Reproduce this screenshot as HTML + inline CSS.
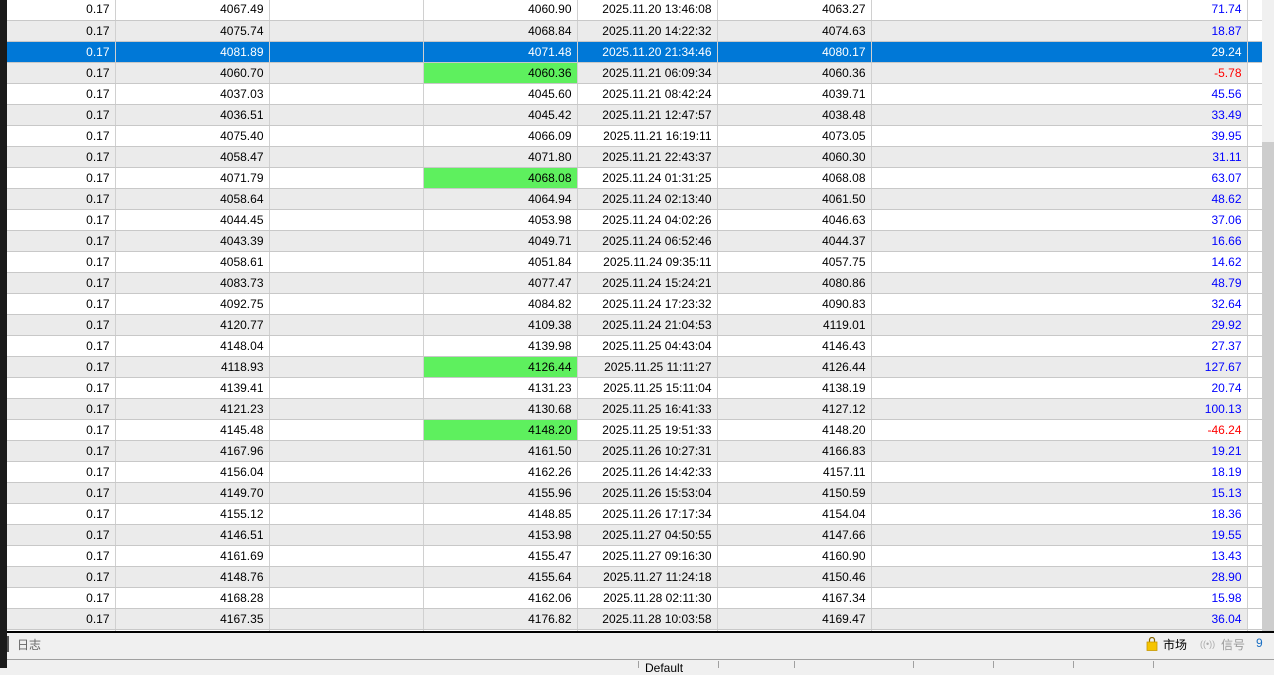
<!DOCTYPE html>
<html><head><meta charset="utf-8"><style>
*{margin:0;padding:0;box-sizing:border-box}
body{width:1274px;height:668px;overflow:hidden;background:#f0f0f0;position:relative;font-family:"Liberation Sans","Noto Sans CJK SC",sans-serif;font-size:12px}
#lb{position:absolute;left:0;top:0;width:7px;height:668px;background:#1a1a1a}
#wrap{position:absolute;left:7px;top:0;width:1255px;height:632px;background:#fff;overflow:hidden}
table{position:absolute;left:0;top:-1px;border-collapse:collapse;table-layout:fixed;width:1255px}
td{height:21px;border-right:1px solid #d0d0d0;border-bottom:1px solid #c8c8c8;text-align:right;padding:0 5px 0 0;white-space:nowrap;color:#000;line-height:20px}
tr:nth-child(even) td{background:#ebebeb}
tr.s td{background:#0078d7!important;color:#fff!important}
td.g{background:#5ef05e!important}
td.b{color:#0000ff}td.r{color:#ff0000}
td.e{border-right:none;background:#fff!important}
#sb{position:absolute;left:1262px;top:0;width:12px;height:632px;background:#f0f0f0}
#th{position:absolute;left:1262px;top:142px;width:12px;height:490px;background:#cdcdcd}
#bl{position:absolute;left:7px;top:631px;width:1267px;height:2px;background:#000}
#st{position:absolute;left:7px;top:633px;width:1267px;height:26px;background:#f0f0f0}
#gl{position:absolute;left:7px;top:659px;width:1267px;height:1px;background:#a0a0a0}
.t{position:absolute;top:636px;font-size:12px}
.d{position:absolute;top:661px;width:1px;height:7px;background:#a0a0a0}
</style></head><body>
<div id="lb"></div>
<div id="wrap"><table>
<colgroup><col style="width:108px"><col style="width:154px"><col style="width:154px"><col style="width:154px"><col style="width:140px"><col style="width:154px"><col style="width:376px"><col style="width:15px"></colgroup>
<tr><td>0.17</td><td>4067.49</td><td></td><td>4060.90</td><td>2025.11.20 13:46:08</td><td>4063.27</td><td class="b">71.74</td><td class="e"></td></tr>
<tr><td>0.17</td><td>4075.74</td><td></td><td>4068.84</td><td>2025.11.20 14:22:32</td><td>4074.63</td><td class="b">18.87</td><td class="e"></td></tr>
<tr class="s"><td>0.17</td><td>4081.89</td><td></td><td>4071.48</td><td>2025.11.20 21:34:46</td><td>4080.17</td><td class="b">29.24</td><td class="e"></td></tr>
<tr><td>0.17</td><td>4060.70</td><td></td><td class="g">4060.36</td><td>2025.11.21 06:09:34</td><td>4060.36</td><td class="r">-5.78</td><td class="e"></td></tr>
<tr><td>0.17</td><td>4037.03</td><td></td><td>4045.60</td><td>2025.11.21 08:42:24</td><td>4039.71</td><td class="b">45.56</td><td class="e"></td></tr>
<tr><td>0.17</td><td>4036.51</td><td></td><td>4045.42</td><td>2025.11.21 12:47:57</td><td>4038.48</td><td class="b">33.49</td><td class="e"></td></tr>
<tr><td>0.17</td><td>4075.40</td><td></td><td>4066.09</td><td>2025.11.21 16:19:11</td><td>4073.05</td><td class="b">39.95</td><td class="e"></td></tr>
<tr><td>0.17</td><td>4058.47</td><td></td><td>4071.80</td><td>2025.11.21 22:43:37</td><td>4060.30</td><td class="b">31.11</td><td class="e"></td></tr>
<tr><td>0.17</td><td>4071.79</td><td></td><td class="g">4068.08</td><td>2025.11.24 01:31:25</td><td>4068.08</td><td class="b">63.07</td><td class="e"></td></tr>
<tr><td>0.17</td><td>4058.64</td><td></td><td>4064.94</td><td>2025.11.24 02:13:40</td><td>4061.50</td><td class="b">48.62</td><td class="e"></td></tr>
<tr><td>0.17</td><td>4044.45</td><td></td><td>4053.98</td><td>2025.11.24 04:02:26</td><td>4046.63</td><td class="b">37.06</td><td class="e"></td></tr>
<tr><td>0.17</td><td>4043.39</td><td></td><td>4049.71</td><td>2025.11.24 06:52:46</td><td>4044.37</td><td class="b">16.66</td><td class="e"></td></tr>
<tr><td>0.17</td><td>4058.61</td><td></td><td>4051.84</td><td>2025.11.24 09:35:11</td><td>4057.75</td><td class="b">14.62</td><td class="e"></td></tr>
<tr><td>0.17</td><td>4083.73</td><td></td><td>4077.47</td><td>2025.11.24 15:24:21</td><td>4080.86</td><td class="b">48.79</td><td class="e"></td></tr>
<tr><td>0.17</td><td>4092.75</td><td></td><td>4084.82</td><td>2025.11.24 17:23:32</td><td>4090.83</td><td class="b">32.64</td><td class="e"></td></tr>
<tr><td>0.17</td><td>4120.77</td><td></td><td>4109.38</td><td>2025.11.24 21:04:53</td><td>4119.01</td><td class="b">29.92</td><td class="e"></td></tr>
<tr><td>0.17</td><td>4148.04</td><td></td><td>4139.98</td><td>2025.11.25 04:43:04</td><td>4146.43</td><td class="b">27.37</td><td class="e"></td></tr>
<tr><td>0.17</td><td>4118.93</td><td></td><td class="g">4126.44</td><td>2025.11.25 11:11:27</td><td>4126.44</td><td class="b">127.67</td><td class="e"></td></tr>
<tr><td>0.17</td><td>4139.41</td><td></td><td>4131.23</td><td>2025.11.25 15:11:04</td><td>4138.19</td><td class="b">20.74</td><td class="e"></td></tr>
<tr><td>0.17</td><td>4121.23</td><td></td><td>4130.68</td><td>2025.11.25 16:41:33</td><td>4127.12</td><td class="b">100.13</td><td class="e"></td></tr>
<tr><td>0.17</td><td>4145.48</td><td></td><td class="g">4148.20</td><td>2025.11.25 19:51:33</td><td>4148.20</td><td class="r">-46.24</td><td class="e"></td></tr>
<tr><td>0.17</td><td>4167.96</td><td></td><td>4161.50</td><td>2025.11.26 10:27:31</td><td>4166.83</td><td class="b">19.21</td><td class="e"></td></tr>
<tr><td>0.17</td><td>4156.04</td><td></td><td>4162.26</td><td>2025.11.26 14:42:33</td><td>4157.11</td><td class="b">18.19</td><td class="e"></td></tr>
<tr><td>0.17</td><td>4149.70</td><td></td><td>4155.96</td><td>2025.11.26 15:53:04</td><td>4150.59</td><td class="b">15.13</td><td class="e"></td></tr>
<tr><td>0.17</td><td>4155.12</td><td></td><td>4148.85</td><td>2025.11.26 17:17:34</td><td>4154.04</td><td class="b">18.36</td><td class="e"></td></tr>
<tr><td>0.17</td><td>4146.51</td><td></td><td>4153.98</td><td>2025.11.27 04:50:55</td><td>4147.66</td><td class="b">19.55</td><td class="e"></td></tr>
<tr><td>0.17</td><td>4161.69</td><td></td><td>4155.47</td><td>2025.11.27 09:16:30</td><td>4160.90</td><td class="b">13.43</td><td class="e"></td></tr>
<tr><td>0.17</td><td>4148.76</td><td></td><td>4155.64</td><td>2025.11.27 11:24:18</td><td>4150.46</td><td class="b">28.90</td><td class="e"></td></tr>
<tr><td>0.17</td><td>4168.28</td><td></td><td>4162.06</td><td>2025.11.28 02:11:30</td><td>4167.34</td><td class="b">15.98</td><td class="e"></td></tr>
<tr><td>0.17</td><td>4167.35</td><td></td><td>4176.82</td><td>2025.11.28 10:03:58</td><td>4169.47</td><td class="b">36.04</td><td class="e"></td></tr>
<tr><td>0.17</td><td>4170.00</td><td></td><td>4170.00</td><td>2025.11.28 12:00:00</td><td>4170.00</td><td class="b">10.00</td><td class="e"></td></tr>
</table></div>
<div id="sb"></div><div id="th"></div>
<div id="bl"></div><div id="st"></div><div id="gl"></div>
<div style="position:absolute;left:7px;top:636px;width:2px;height:16px;background:#555"></div>
<div class="t" style="left:17px;color:#666">日志</div>
<svg style="position:absolute;left:1146px;top:637px" width="12" height="14" viewBox="0 0 12 14"><path d="M3.5 5V3a2.5 2.5 0 0 1 5 0v2" fill="none" stroke="#8a6a00" stroke-width="1.2"/><rect x="1" y="5" width="10" height="8.5" fill="#f5c400" stroke="#c99a00" stroke-width="0.8"/></svg>
<div class="t" style="left:1163px;color:#000">市场</div>
<div class="t" style="left:1200px;color:#aaa;font-size:9px;top:639px">((•))</div>
<div class="t" style="left:1221px;color:#999">信号</div>
<div class="t" style="left:1256px;color:#1a6fc4">9</div>
<div class="d" style="left:638px"></div><div class="d" style="left:718px"></div><div class="d" style="left:794px"></div><div class="d" style="left:913px"></div><div class="d" style="left:993px"></div><div class="d" style="left:1073px"></div><div class="d" style="left:1153px"></div>
<div style="position:absolute;left:645px;top:662px;font-size:12px;color:#000;line-height:12px">Default</div>
</body></html>
